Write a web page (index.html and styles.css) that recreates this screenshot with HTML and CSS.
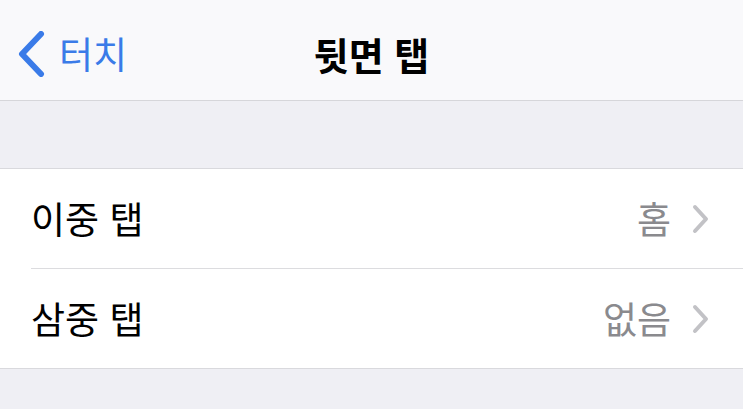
FILE: index.html
```html
<!DOCTYPE html>
<html lang="ko">
<head>
  <meta charset="UTF-8">
  <title>뒷면 탭</title>
  <link rel="stylesheet" href="styles.css">
</head>
<body>

  <!-- 상단 바 -->
  <div class="nav-bar">
    <div class="back">
      <svg class="back-icon" width="28" height="46" viewBox="0 0 28 46">
        <path d="M24 3 L5 23 L24 43" fill="none" stroke="#3a7be8" stroke-width="6" stroke-linecap="round" stroke-linejoin="round"/>
      </svg>
      <span>터치</span>
    </div>
    <div class="title">뒷면 탭</div>
    <div></div>
  </div>

  <div class="spacer"></div>

  <div class="list">
    <div class="row">
      <div class="label">이중 탭</div>
      <div class="value">홈</div>
      <svg class="chevron" width="18" height="30" viewBox="0 0 18 30">
        <path d="M3 3 L14 15 L3 27" fill="none" stroke="#c2c2c6" stroke-width="4" stroke-linecap="round" stroke-linejoin="round"/>
      </svg>
    </div>
    <div class="row">
      <div class="label">삼중 탭</div>
      <div class="value">없음</div>
      <svg class="chevron" width="18" height="30" viewBox="0 0 18 30">
        <path d="M3 3 L14 15 L3 27" fill="none" stroke="#c2c2c6" stroke-width="4" stroke-linecap="round" stroke-linejoin="round"/>
      </svg>
    </div>
  </div>

</body>
</html>
```

FILE: styles.css
```css
body {
  margin: 0;
  background-color: #efeff4;
  font-family: "Noto Sans CJK KR", "Noto Sans", sans-serif;
  height: 409px;
  overflow: hidden;
}
.nav-bar {
  height: 101px;
  box-sizing: border-box;
  padding-top: 8px;
  background-color: #f9f9fb;
  border-bottom: 1px solid #d6d6da;
  display: grid;
  grid-template-columns: 1fr auto 1fr;
  align-items: center;
}
.back {
  display: flex;
  align-items: center;
  gap: 14px;
  padding-left: 17px;
  color: #3a7be8;
  font-size: 37px;
}
.back span {
  margin-top: -2px;
}
.title {
  font-size: 38px;
  font-weight: bold;
  color: #000;
  margin-top: -2px;
}
.spacer {
  height: 67px;
}
.list {
  background-color: white;
  border-top: 1px solid #d9d9dd;
  border-bottom: 1px solid #d9d9dd;
}
.row {
  height: 99px;
  display: flex;
  align-items: center;
  padding-right: 33px;
  margin-left: 31px;
}
.row + .row {
  border-top: 1px solid #dcdcdf;
}
.label {
  flex: 1;
  font-size: 37px;
  color: #000;
  margin-top: -2px;
}
.value {
  font-size: 37px;
  color: #8a8a8e;
  margin-right: 21px;
  margin-top: -2px;
}
.chevron {
  display: block;
}
```
